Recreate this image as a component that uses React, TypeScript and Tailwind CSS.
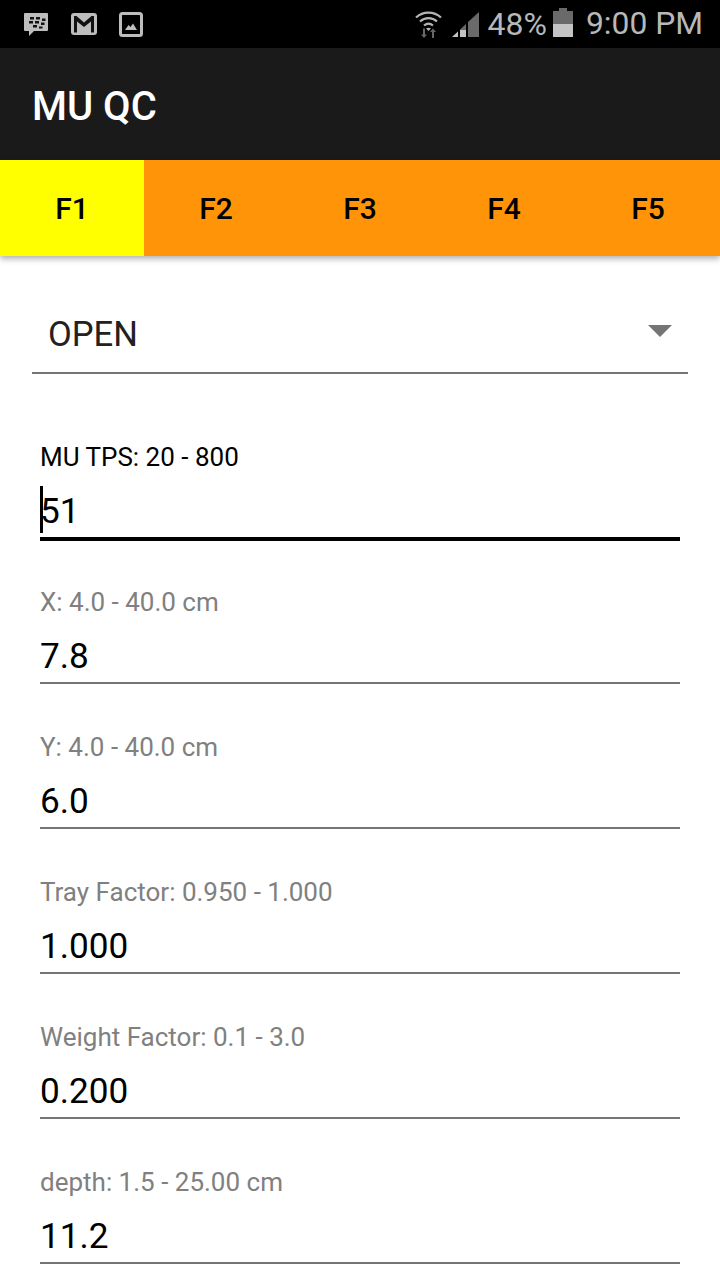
import React from 'react';

const tabs = ['F1', 'F2', 'F3', 'F4', 'F5'];

const fields = [
  { label: 'X: 4.0 - 40.0 cm', value: '7.8' },
  { label: 'Y: 4.0 - 40.0 cm', value: '6.0' },
  { label: 'Tray Factor: 0.950 - 1.000', value: '1.000' },
  { label: 'Weight Factor: 0.1 - 3.0', value: '0.200' },
  { label: 'depth: 1.5 - 25.00 cm', value: '11.2' },
];

const BbmIcon = () => (
  <svg width="24" height="23" viewBox="0 0 24 23">
    <path d="M1 0h22a1 1 0 0 1 1 1v16a1 1 0 0 1-1 1H10l-5 5v-5H1a1 1 0 0 1-1-1V1a1 1 0 0 1 1-1z" fill="#bdbdbd" />
    <g fill="#111">
      <rect x="6" y="4" width="4" height="2.500" />
      <rect x="12" y="4" width="4" height="2.500" />
      <rect x="18" y="5.500" width="3.500" height="2.500" />
      <rect x="5" y="8" width="4" height="2.500" />
      <rect x="11" y="8" width="4" height="2.500" />
      <rect x="17" y="9.500" width="3.500" height="2.500" />
      <rect x="9" y="12" width="4" height="2.500" />
      <rect x="15" y="13.500" width="3.500" height="2" />
    </g>
  </svg>
);

const GmailIcon = () => (
  <svg width="26" height="22" viewBox="0 0 26 22">
    <rect x="0" y="0" width="26" height="22" rx="3" fill="#bdbdbd" />
    <path d="M3 19.500V3h2.500L13 9.500 20.500 3H23v16.500h-3V8.500l-7 5.500-7-5.500v11z" fill="#111" />
  </svg>
);

const ImageIcon = () => (
  <svg width="24" height="25" viewBox="0 0 24 25">
    <rect x="1.500" y="1.500" width="21" height="22" rx="2" fill="none" stroke="#bdbdbd" strokeWidth="3" />
    <path d="M6 18l3.500-5 2 2 2.500-3.500 4 6.500z" fill="#bdbdbd" />
  </svg>
);

const WifiIcon = () => (
  <svg width="27" height="28" viewBox="0 0 27 28">
    <g fill="none" stroke="#b5b5b5" strokeWidth="2.200">
      <path d="M1 7.500C8 1 19 1 26 7.500" />
      <path d="M5 11.500c5-4.400 12-4.400 17 0" />
      <path d="M9 15.500c2.800-2.200 6.200-2.200 9 0" />
    </g>
    <path d="M11 18.500c1.500-1.100 3.500-1.100 5 0L13.500 21z" fill="#b5b5b5" />
    <path d="M10 18.500v6h2L9 28l-3-3.500h2v-6z" fill="#666" />
    <path d="M17 28v-6h-2l3-3.500 3 3.500h-2v6z" fill="#666" />
  </svg>
);

const SignalIcon = () => (
  <svg width="27" height="25" viewBox="0 0 27 25">
    <path d="M27 0v25H16V10z" fill="#6a6a6a" />
    <path d="M14 12v13H8v-7.500z" fill="#6a6a6a" />
    <path d="M14 18v7H8v-7z" fill="#c4c4c4" />
    <path d="M6 19.500V25H0z" fill="#c4c4c4" />
  </svg>
);

const BatteryIcon = () => (
  <div className="flex flex-col items-center w-[20px] mb-[4px]">
    <div className="w-[8px] h-[3px] bg-[#6a6a6a]" />
    <div className="w-[20px] h-[13px] bg-[#6a6a6a]" />
    <div className="w-[20px] h-[13px] bg-[#c4c4c4]" />
  </div>
);

const App: React.FC = () => {
  return (
    <div className="w-[720px] h-[1280px] overflow-hidden bg-white font-['Roboto',sans-serif]">
      {/* status bar */}
      <div className="h-[48px] bg-black flex items-center justify-between pl-[24px] pr-[17px]">
        <div className="flex items-center gap-[23px]">
          <BbmIcon />
          <GmailIcon />
          <div className="-ml-[1px]"><ImageIcon /></div>
        </div>
        <div className="flex items-center">
          <WifiIcon />
          <div className="ml-[10px]"><SignalIcon /></div>
          <span className="ml-[9px] text-[32px] leading-none text-[#b8b8b8]">48%</span>
          <div className="ml-[6px]"><BatteryIcon /></div>
          <span className="ml-[13px] text-[31.8px] leading-none text-[#b8b8b8]">9:00 PM</span>
        </div>
      </div>

      {/* toolbar */}
      <div className="h-[112px] bg-[#1a1a1a] flex items-center pl-[32px] pt-[6px]">
        <span className="text-[40px] font-medium text-white">MU QC</span>
      </div>

      {/* tabs */}
      <div className="relative h-[96px] flex shadow-[0_3px_6px_rgba(0,0,0,0.3)]">
        {tabs.map((tab, index) => (
          <div
            key={tab}
            className={`w-[144px] flex items-center justify-center text-[30px] font-medium text-black ${index === 0 ? 'bg-[#ffff00]' : 'bg-[#ff9408]'}`}
          >
            {tab}
          </div>
        ))}
      </div>

      {/* spinner */}
      <div className="mx-[32px] mt-[48px] h-[70px] border-b-2 border-[#757575] flex items-center justify-between px-[16px]">
        <span className="text-[34.6px] text-[#212121] leading-none pb-[7px]">OPEN</span>
        <div className="w-0 h-0 mb-[14px] border-x-[12px] border-x-transparent border-t-[12px] border-t-[#757575]" />
      </div>

      {/* fields */}
      <div className="mx-[40px] mt-[68px]">
        <div className="relative">
          <div className="text-[26px] leading-[30px] text-black">MU TPS: 20 - 800</div>
          <div className="h-[69px] pt-[15px] border-b-4 border-black flex items-center">
            <span className="text-[35.2px] leading-none text-black">51</span>
          </div>
          <div className="absolute left-0 top-[44px] w-[3px] h-[47px] bg-black" />
        </div>
        {fields.map((field, index) => (
          <div key={field.label} className={index === 0 ? 'mt-[46px]' : 'mt-[48px]'}>
            <div className="text-[26px] leading-[30px] text-[#808080]">{field.label}</div>
            <div className="h-[67px] pt-[15px] border-b-2 border-[#757575] flex items-center">
              <span className="text-[35.2px] leading-none text-black">{field.value}</span>
            </div>
          </div>
        ))}
      </div>
    </div>
  );
};

export default App;
